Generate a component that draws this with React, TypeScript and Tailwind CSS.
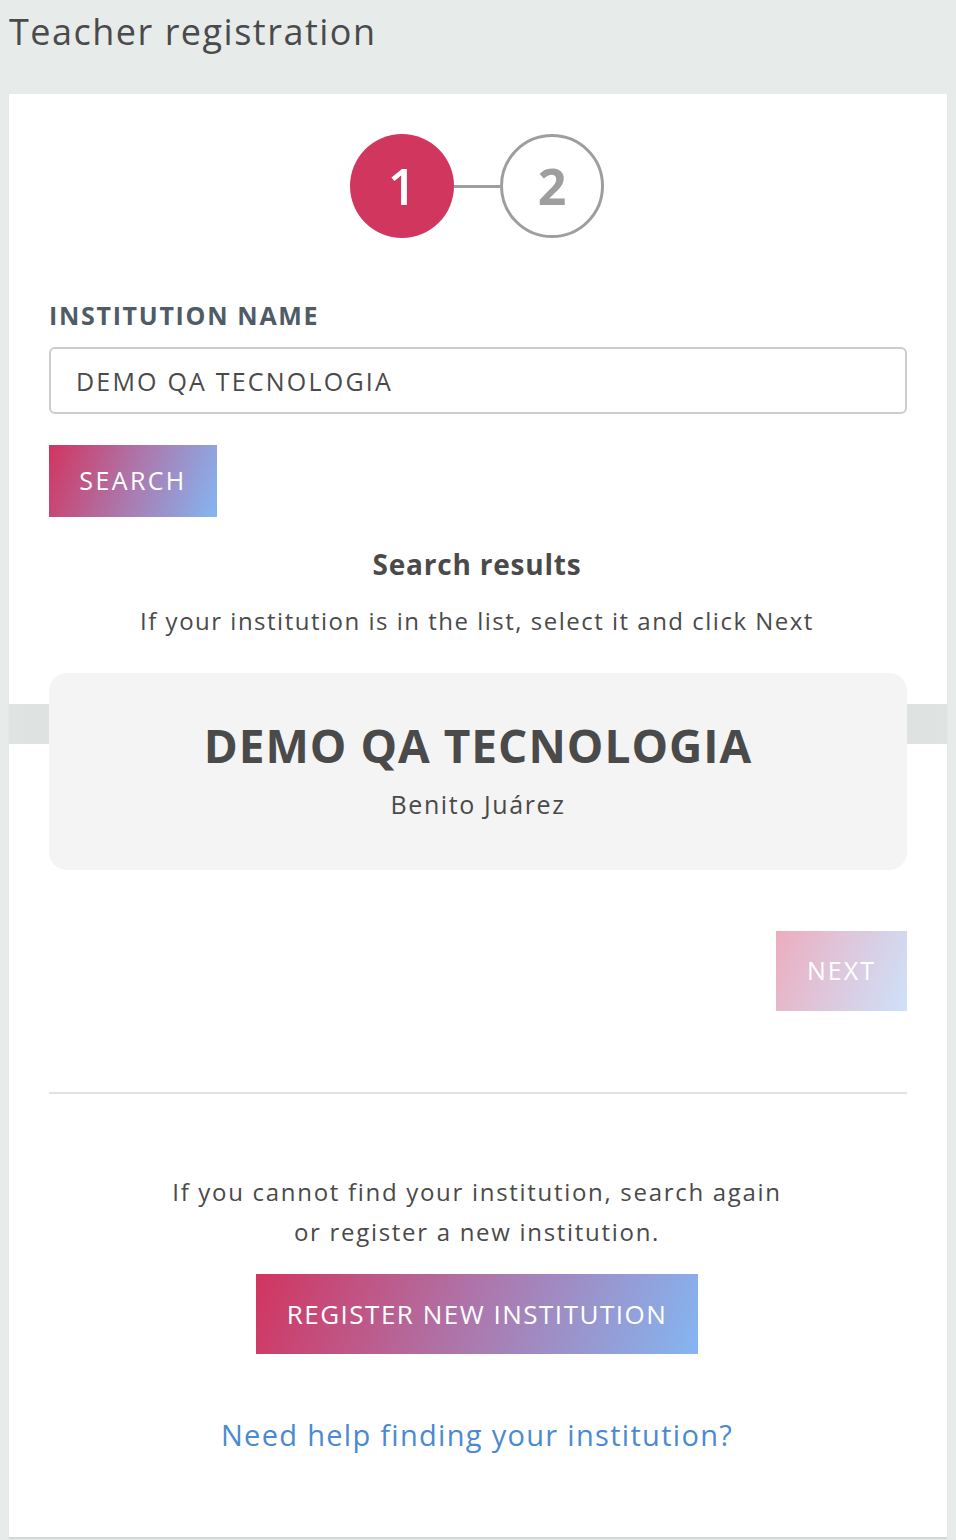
import React, { useState } from 'react';

const font = { fontFamily: '"Open Sans", Lato, sans-serif' };

const gradient = 'bg-[linear-gradient(112deg,#d2345f_0%,#ac78ad_50%,#84b6f2_100%)]';

const StepCircle: React.FC<{ n: number; active?: boolean }> = ({ n, active }) => (
  <div
    className={`w-[104px] h-[104px] rounded-full flex items-center justify-center text-[50px] leading-none ${
      active ? 'bg-[#d1365e] text-white font-semibold' : 'border-[3px] border-[#9e9e9e] text-[#9e9e9e] font-bold'
    }`}
  >
    {n}
  </div>
);

export default function App() {
  const [name, setName] = useState('DEMO QA TECNOLOGIA');

  return (
    <div className="min-h-[1540px] bg-[#e7ebea] text-[#4a4a4a]" style={font}>
      <h1 className="text-[36px] leading-none pl-[9px] pt-[14px] h-[94px] text-[#4a4a4a] tracking-[1.5px]">
        Teacher registration
      </h1>

      <div className="ml-[9px] w-[938px] h-[1443px] bg-white shadow-[0_2px_1px_#d5d8d7] px-10 pt-10">
        {/* steps */}
        <div className="flex items-center justify-center pr-[2px]">
          <StepCircle n={1} active />
          <div className="w-[46px] h-[3px] bg-[#9e9e9e]" />
          <StepCircle n={2} />
        </div>

        <label className="block mt-[65px] text-[25px] leading-none font-bold text-[#4f5b66] tracking-[1.7px]">
          INSTITUTION NAME
        </label>
        <input
          value={name}
          onChange={(e) => setName(e.target.value)}
          className="mt-[19px] w-[858px] h-[67px] border-2 border-[#cccccc] rounded-[6px] px-[25px] text-[25px] text-[#4a4a4a] outline-none tracking-[2.2px]"
          style={font}
        />

        <button className={`mt-[31px] w-[168px] h-[72px] ${gradient} text-white text-[25px] tracking-[2.4px] block`}>
          SEARCH
        </button>

        <div className="text-center pr-[2px]">
          <h2 className="mt-[33px] text-[28px] font-bold leading-none tracking-[0.8px]">Search results</h2>
          <p className="mt-[31px] text-[24px] leading-none tracking-[1.5px]">
            If your institution is in the list, select it and click Next
          </p>
        </div>

        {/* result */}
        <div className="relative mt-[40px] w-[858px]">
          <div className="absolute left-[-40px] right-[-40px] top-[31px] h-[40px] bg-[linear-gradient(90deg,#dfe3e2,#d2d5d4_50%,#dfe3e2)]" />
          <div className="relative h-[197px] bg-[#f4f4f4] rounded-[18px] flex flex-col items-center pt-[49px]">
            <div className="text-[46px] font-bold leading-none text-[#4a4a4a] tracking-[1px]">DEMO QA TECNOLOGIA</div>
            <div className="mt-[24px] text-[25px] leading-none tracking-[1.6px]">Benito Juárez</div>
          </div>
        </div>

        <div className="flex justify-end w-[858px] mt-[61px]">
          <button className={`w-[131px] h-[80px] ${gradient} opacity-40 text-white text-[25px] tracking-[2px]`}>NEXT</button>
        </div>

        <hr className="mt-[81px] w-[858px] border-t-2 border-[#e2e2e2]" />

        <p className="mt-[78px] text-center text-[24px] leading-[40px] pr-[2px] tracking-[1.7px]">
          If you cannot find your institution, search again
          <br />
          or register a new institution.
        </p>

        <div className="flex justify-center pr-[2px] mt-[22px]">
          <button className={`w-[442px] h-[80px] ${gradient} text-white text-[26px] tracking-[1.5px]`}>
            REGISTER NEW INSTITUTION
          </button>
        </div>

        <div className="text-center mt-[66px] pr-[2px]">
          <a href="#" className="text-[29px] text-[#4a8ad0] leading-none tracking-[1.3px]">
            Need help finding your institution?
          </a>
        </div>
      </div>
    </div>
  );
}
